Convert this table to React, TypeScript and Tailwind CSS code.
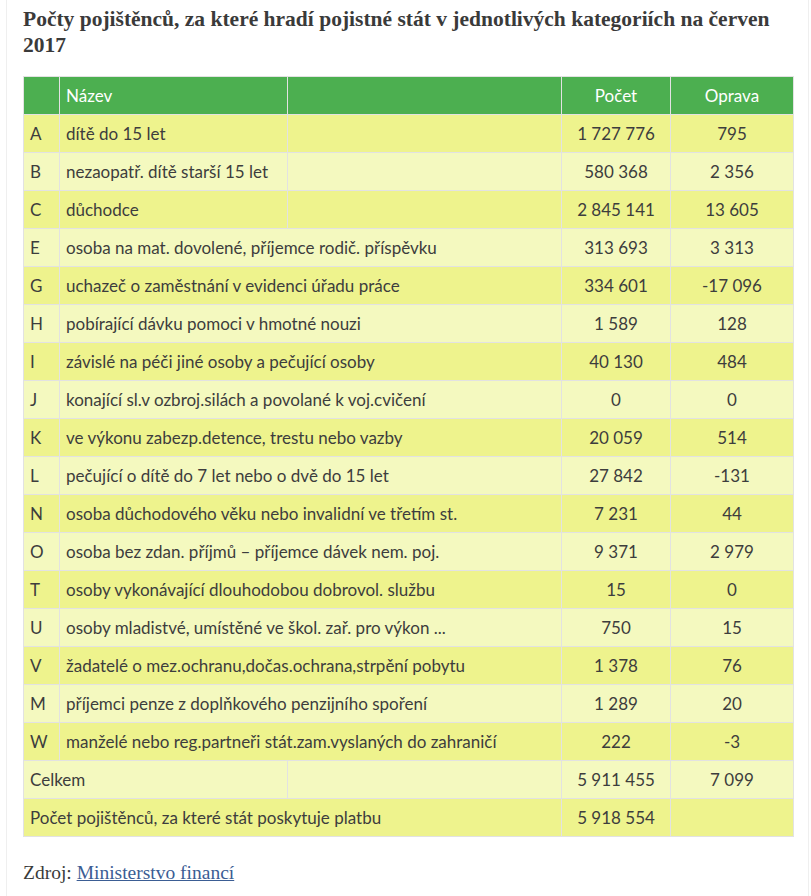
import React from "react";

type Row = {
  code: string;
  name: string;
  count: string;
  fix: string;
  split?: boolean;
};

const rows: Array<Row> = [
  { code: "A", name: "dítě do 15 let", count: "1 727 776", fix: "795", split: true },
  { code: "B", name: "nezaopatř. dítě starší 15 let", count: "580 368", fix: "2 356", split: true },
  { code: "C", name: "důchodce", count: "2 845 141", fix: "13 605", split: true },
  { code: "E", name: "osoba na mat. dovolené, příjemce rodič. příspěvku", count: "313 693", fix: "3 313" },
  { code: "G", name: "uchazeč o zaměstnání v evidenci úřadu práce", count: "334 601", fix: "-17 096" },
  { code: "H", name: "pobírající dávku pomoci v hmotné nouzi", count: "1 589", fix: "128" },
  { code: "I", name: "závislé na péči jiné osoby a pečující osoby", count: "40 130", fix: "484" },
  { code: "J", name: "konající sl.v ozbroj.silách a povolané k voj.cvičení", count: "0", fix: "0" },
  { code: "K", name: "ve výkonu zabezp.detence, trestu nebo vazby", count: "20 059", fix: "514" },
  { code: "L", name: "pečující o dítě do 7 let nebo o dvě do 15 let", count: "27 842", fix: "-131" },
  { code: "N", name: "osoba důchodového věku nebo invalidní ve třetím st.", count: "7 231", fix: "44" },
  { code: "O", name: "osoba bez zdan. příjmů – příjemce dávek nem. poj.", count: "9 371", fix: "2 979" },
  { code: "T", name: "osoby vykonávající dlouhodobou dobrovol. službu", count: "15", fix: "0" },
  { code: "U", name: "osoby mladistvé, umístěné ve škol. zař. pro výkon ...", count: "750", fix: "15" },
  { code: "V", name: "žadatelé o mez.ochranu,dočas.ochrana,strpění pobytu", count: "1 378", fix: "76" },
  { code: "M", name: "příjemci penze z doplňkového penzijního spoření", count: "1 289", fix: "20" },
  { code: "W", name: "manželé nebo reg.partneři stát.zam.vyslaných do zahraničí", count: "222", fix: "-3" },
];

const cell = "border border-[#e2e2e2] h-[38px] px-[6px] py-0 align-middle";

const App = () => {
  const rowBg = (i: number) => (i % 2 === 0 ? "bg-[#eef38d]" : "bg-[#f4f9bf]");

  return (
    <div className="min-h-screen bg-white">
      <div className="ml-[6px] w-[803px] min-h-screen border-x border-[#efefef] px-4 pt-[6px] pb-6">
        <h2 className="font-['Liberation_Serif',serif] font-bold text-[21.5px] leading-[26px] text-[#3a3a3a]">
          Počty pojištěnců, za které hradí pojistné stát v jednotlivých kategoriích na červen 2017
        </h2>

        <table className="mt-[18px] w-[770px] border-collapse table-fixed font-['Lato',sans-serif] text-[17px] text-[#3d3d3d]">
          <colgroup>
            <col className="w-[36px]" />
            <col className="w-[228px]" />
            <col className="w-[274px]" />
            <col className="w-[109px]" />
            <col className="w-[123px]" />
          </colgroup>
          <thead>
            <tr className="bg-[#4caf50] text-white">
              <th className={cell}></th>
              <th className={`${cell} text-left font-normal`}>Název</th>
              <th className={cell}></th>
              <th className={`${cell} text-center font-normal`}>Počet</th>
              <th className={`${cell} text-center font-normal`}>Oprava</th>
            </tr>
          </thead>
          <tbody>
            {rows.map((v, key) => (
              <tr className={rowBg(key)} key={key}>
                <td className={cell}>{v.code}</td>
                {v.split ? (
                  <>
                    <td className={`${cell} whitespace-nowrap`}>{v.name}</td>
                    <td className={cell}></td>
                  </>
                ) : (
                  <td className={`${cell} whitespace-nowrap`} colSpan={2}>
                    {v.name}
                  </td>
                )}
                <td className={`${cell} text-center`}>{v.count}</td>
                <td className={`${cell} text-center`}>{v.fix}</td>
              </tr>
            ))}
            <tr className={rowBg(rows.length)}>
              <td className={cell} colSpan={2}>
                Celkem
              </td>
              <td className={cell}></td>
              <td className={`${cell} text-center`}>5 911 455</td>
              <td className={`${cell} text-center`}>7 099</td>
            </tr>
            <tr className={rowBg(rows.length + 1)}>
              <td className={cell} colSpan={3}>
                Počet pojištěnců, za které stát poskytuje platbu
              </td>
              <td className={`${cell} text-center`}>5 918 554</td>
              <td className={cell}></td>
            </tr>
          </tbody>
        </table>

        <p className="mt-[22px] font-['Liberation_Serif',serif] text-[19.5px] leading-[28px] text-[#3a3a3a]">
          Zdroj:{" "}
          <a href="#" className="text-[#3b5d94] underline">
            Ministerstvo financí
          </a>
        </p>
      </div>
    </div>
  );
};

export default App;
